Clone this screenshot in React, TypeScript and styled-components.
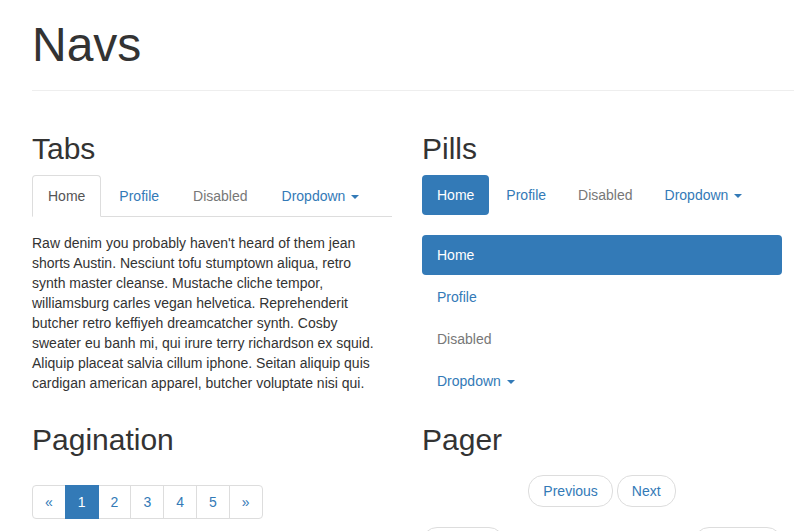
import React from 'react';
import styled, { createGlobalStyle, css } from 'styled-components';

const Colors = {
  text: '#333333',
  link: '#337ab7',
  muted: '#777777',
  active: '#555555',
  border: '#dddddd',
  rule: '#eeeeee',
  white: '#ffffff',
};

const GlobalStyle = createGlobalStyle`
  html, body {
    margin: 0;
    padding: 0;
    overflow: hidden;
    background: ${Colors.white};
  }
  body {
    font-family: "Liberation Sans", Arial, Helvetica, sans-serif;
    font-size: 14px;
    line-height: 20px;
    color: ${Colors.text};
  }
  * {
    box-sizing: border-box;
  }
`;

const Page = styled.div`
  padding-left: 32px;
`;

const PageHeader = styled.div`
  padding: 18px 0 19px;
  border-bottom: 1px solid ${Colors.rule};
`;

const Title = styled.h1`
  margin: 0;
  font-size: 48px;
  line-height: 53px;
  font-weight: 400;
`;

const Row = styled.div<{ $top: number }>`
  display: grid;
  grid-template-columns: 360px 360px;
  column-gap: 30px;
  align-items: start;
  padding-top: ${(p) => p.$top}px;
`;

const Column = styled.section`
  display: flex;
  flex-direction: column;
`;

const SectionTitle = styled.h2`
  margin: 0 0 10px;
  font-size: 30px;
  line-height: 33px;
  font-weight: 400;
`;

const NavList = styled.ul`
  display: flex;
  margin: 0;
  padding: 0;
  list-style: none;
`;

const TabList = styled(NavList)`
  border-bottom: 1px solid ${Colors.border};
`;

const TabItem = styled.li`
  margin: 0 2px -1px 0;
`;

const linkState = css<{ $disabled?: boolean }>`
  color: ${(p) => (p.$disabled ? Colors.muted : Colors.link)};
  cursor: ${(p) => (p.$disabled ? 'not-allowed' : 'pointer')};
`;

const TabLink = styled.a<{ $active?: boolean; $disabled?: boolean }>`
  display: block;
  padding: 10px 15px;
  border: 1px solid transparent;
  border-radius: 4px 4px 0 0;
  text-decoration: none;
  ${linkState}
  ${(p) =>
    p.$active &&
    css`
      color: ${Colors.active};
      background: ${Colors.white};
      border-color: ${Colors.border} ${Colors.border} transparent;
    `}
`;

const TabPane = styled.p`
  margin: 16px 0 10px;
  white-space: nowrap;
`;

const PillList = styled(NavList)<{ $stacked?: boolean }>`
  gap: 2px;
  ${(p) =>
    p.$stacked &&
    css`
      flex-direction: column;
      margin-top: 20px;
    `}
`;

const PillLink = styled.a<{ $active?: boolean; $disabled?: boolean }>`
  display: block;
  padding: 10px 15px;
  border-radius: 4px;
  text-decoration: none;
  ${linkState}
  ${(p) =>
    p.$active &&
    css`
      color: ${Colors.white};
      background: ${Colors.link};
    `}
`;

const Caret = styled.span`
  display: inline-block;
  width: 0;
  height: 0;
  margin-left: 6px;
  vertical-align: middle;
  border-top: 4px solid;
  border-left: 4px solid transparent;
  border-right: 4px solid transparent;
`;

const Pagination = styled.ul`
  display: flex;
  align-self: flex-start;
  margin: 19px 0 20px;
  padding: 0;
  list-style: none;
`;

const PageItem = styled.li`
  & + & {
    margin-left: -1px;
  }
  &:first-child a {
    border-radius: 4px 0 0 4px;
  }
  &:last-child a {
    border-radius: 0 4px 4px 0;
  }
`;

const PageLink = styled.a<{ $active?: boolean }>`
  position: relative;
  display: block;
  padding: 6px 12px;
  border: 1px solid ${Colors.border};
  color: ${Colors.link};
  background: ${Colors.white};
  text-decoration: none;
  ${(p) =>
    p.$active &&
    css`
      z-index: 2;
      color: ${Colors.white};
      background: ${Colors.link};
      border-color: ${Colors.link};
    `}
`;

const Pager = styled.ul<{ $spread?: boolean }>`
  display: flex;
  justify-content: ${(p) => (p.$spread ? 'space-between' : 'center')};
  gap: 4px;
  margin: ${(p) => (p.$spread ? '0' : '9px 0 20px')};
  padding: 0;
  list-style: none;
`;

const PagerLink = styled.a<{ $disabled?: boolean }>`
  display: inline-block;
  padding: 5px 14px;
  border: 1px solid ${Colors.border};
  border-radius: 15px;
  background: ${Colors.white};
  text-decoration: none;
  ${linkState}
`;

const navItems = [
  { label: 'Home', active: true },
  { label: 'Profile' },
  { label: 'Disabled', disabled: true },
  { label: 'Dropdown', dropdown: true },
];

// line breaks as they fall in the reference
const paneLines = [
  "Raw denim you probably haven't heard of them jean",
  'shorts Austin. Nesciunt tofu stumptown aliqua, retro',
  'synth master cleanse. Mustache cliche tempor,',
  'williamsburg carles vegan helvetica. Reprehenderit',
  'butcher retro keffiyeh dreamcatcher synth. Cosby',
  'sweater eu banh mi, qui irure terry richardson ex squid.',
  'Aliquip placeat salvia cillum iphone. Seitan aliquip quis',
  'cardigan american apparel, butcher voluptate nisi qui.',
];

const App = () => {
  return (
    <Page>
      <GlobalStyle />
      <PageHeader>
        <Title>Navs</Title>
      </PageHeader>

      <Row $top={41}>
        <Column>
          <SectionTitle>Tabs</SectionTitle>
          <TabList>
            {navItems.map((item) => (
              <TabItem key={item.label}>
                <TabLink $active={item.active} $disabled={item.disabled}>
                  {item.label}
                  {item.dropdown && <Caret />}
                </TabLink>
              </TabItem>
            ))}
          </TabList>
          <TabPane>
            {paneLines.map((line, i) => (
              <React.Fragment key={i}>
                {line}
                {i < paneLines.length - 1 && <br />}
              </React.Fragment>
            ))}
          </TabPane>
        </Column>

        <Column>
          <SectionTitle>Pills</SectionTitle>
          <PillList>
            {navItems.map((item) => (
              <li key={item.label}>
                <PillLink $active={item.active} $disabled={item.disabled}>
                  {item.label}
                  {item.dropdown && <Caret />}
                </PillLink>
              </li>
            ))}
          </PillList>
          <PillList $stacked>
            {navItems.map((item) => (
              <li key={item.label}>
                <PillLink $active={item.active} $disabled={item.disabled}>
                  {item.label}
                  {item.dropdown && <Caret />}
                </PillLink>
              </li>
            ))}
          </PillList>
        </Column>
      </Row>

      <Row $top={20}>
        <Column>
          <SectionTitle>Pagination</SectionTitle>
          <Pagination>
            {['«', '1', '2', '3', '4', '5', '»'].map((label) => (
              <PageItem key={label}>
                <PageLink $active={label === '1'}>{label}</PageLink>
              </PageItem>
            ))}
          </Pagination>
        </Column>

        <Column>
          <SectionTitle>Pager</SectionTitle>
          <Pager>
            <li>
              <PagerLink>Previous</PagerLink>
            </li>
            <li>
              <PagerLink>Next</PagerLink>
            </li>
          </Pager>
          <Pager $spread>
            <li>
              <PagerLink $disabled>← Older</PagerLink>
            </li>
            <li>
              <PagerLink>Newer →</PagerLink>
            </li>
          </Pager>
        </Column>
      </Row>
    </Page>
  );
};

export default App;
